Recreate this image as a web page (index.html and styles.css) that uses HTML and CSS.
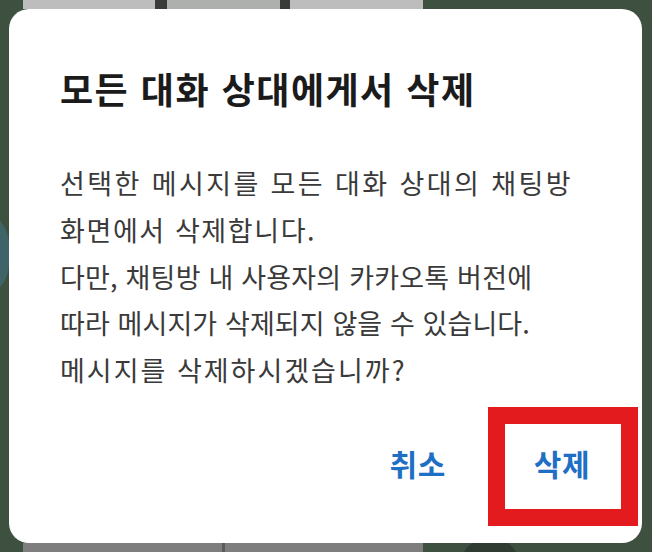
FILE: index.html
```html
<!DOCTYPE html>
<html lang="ko">
<head>
<meta charset="utf-8">
<link rel="stylesheet" href="styles.css">
</head>
<body>
<div class="screen">
  <div class="backdrop">
    <div class="strip strip-top">
      <div class="card light w132"></div>
      <div class="card dark w12"></div>
      <div class="card mid w113"></div>
      <div class="card dark w10"></div>
      <div class="card light w133"></div>
    </div>
    <div class="blob"></div>
    <div class="strip strip-bottom">
      <div class="card grey w199"></div>
      <div class="card line w3"></div>
      <div class="card grey w198"></div>
      <div class="circle"></div>
    </div>
  </div>
  <div class="dialog">
    <h1 class="title">모든 대화 상대에게서 삭제</h1>
    <p class="message">
      <span class="line l1">선택한 메시지를 모든 대화 상대의 채팅방</span>
      <span class="line l2">화면에서 삭제합니다.</span>
      <span class="line l3">다만, 채팅방 내 사용자의 카카오톡 버전에</span>
      <span class="line l4">따라 메시지가 삭제되지 않을 수 있습니다.</span>
      <span class="line l5">메시지를 삭제하시겠습니까?</span>
    </p>
    <div class="actions">
      <button class="btn">취소</button>
      <button class="btn btn-delete">삭제<span class="highlight"></span></button>
    </div>
  </div>
</div>
</body>
</html>
```

FILE: styles.css
```css
html, body {
  margin: 0;
  padding: 0;
}
body {
  background: #3e5140;
  font-family: "Noto Sans CJK KR", "Noto Sans", sans-serif;
}
.screen {
  position: relative;
  width: 652px;
  height: 552px;
  overflow: hidden;
  background: #3e5140;
}
.backdrop {
  display: flex;
  flex-direction: column;
  height: 552px;
}
.strip {
  display: flex;
  height: 9px;
  padding-left: 23px;
}
.strip-bottom {
  margin-top: auto;
  position: relative;
}
.card.light { background: #bdbdbd; }
.card.mid { background: #aeb0ae; }
.card.dark { background: #3a3a3a; }
.card.grey { background: #7e7e7e; }
.card.line { background: #5a5a5a; }
.w132 { width: 132px; }
.w12 { width: 12px; }
.w113 { width: 113px; }
.w10 { width: 10px; }
.w133 { width: 133px; }
.w199 { width: 199px; }
.w3 { width: 3px; }
.w198 { width: 198px; }
.circle {
  width: 60px;
  height: 60px;
  border-radius: 50%;
  background: #2f3b31;
  margin-left: 37px;
  margin-top: -6px;
}
.blob {
  width: 30px;
  height: 70px;
  margin-top: 210px;
  margin-left: -20px;
  border-radius: 50%;
  background: #3f6468;
}
.dialog {
  position: absolute;
  left: 9px;
  top: 9px;
  width: 633px;
  height: 534px;
  box-sizing: border-box;
  background: #ffffff;
  border-radius: 20px;
  padding: 58px 40px 0 51px;
  display: flex;
  flex-direction: column;
}
.title {
  margin: 0;
  font-size: 36px;
  line-height: 42px;
  font-weight: 700;
  color: #1b1b1b;
  letter-spacing: 1.5px;
}
.message {
  margin: 51px 0 0 0;
  font-size: 27px;
  line-height: 46.8px;
  font-weight: 400;
  color: #3a3a3a;
}
.line {
  display: block;
  white-space: nowrap;
}
.l1 { letter-spacing: 2.4px; }
.l2 { letter-spacing: 1.6px; }
.l3 { letter-spacing: 0.2px; }
.l4 { letter-spacing: 0.1px; }
.l5 { letter-spacing: 2px; }
.actions {
  display: flex;
  justify-content: flex-end;
  gap: 88px;
  margin-top: 52px;
  margin-right: 12px;
}
.btn {
  position: relative;
  border: 0;
  background: transparent;
  font-family: inherit;
  font-size: 30px;
  line-height: 34px;
  font-weight: 700;
  color: #1f6fc5;
  padding: 0;
  margin: 0;
  letter-spacing: 0.5px;
}
.highlight {
  position: absolute;
  left: -46px;
  top: -39px;
  width: 150px;
  height: 119px;
  box-sizing: border-box;
  border: 17px solid #e31b1e;
}
```
